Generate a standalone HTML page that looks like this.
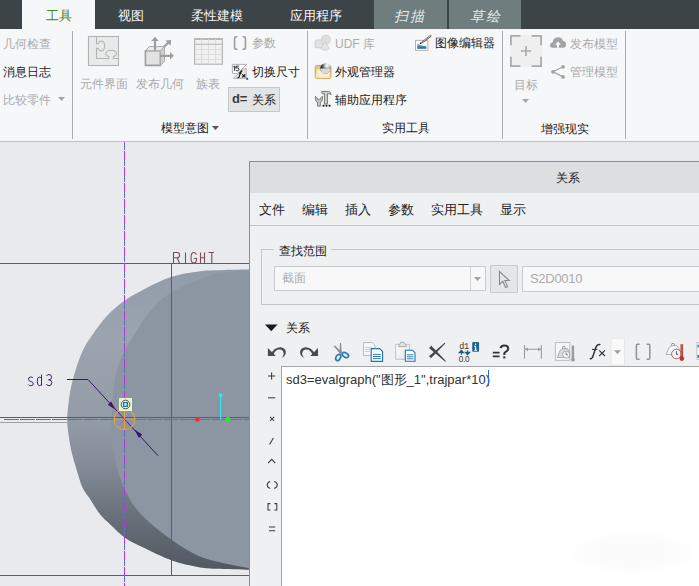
<!DOCTYPE html>
<html><head><meta charset="utf-8">
<style>
*{box-sizing:border-box}
html,body{margin:0;padding:0;width:699px;height:586px;overflow:hidden;background:#e9eaed;font-family:"Liberation Sans",sans-serif;}
.a{position:absolute;white-space:nowrap;line-height:1}
#tabs{position:absolute;left:0;top:0;width:699px;height:29px;background:#3c4447}
.tab{position:absolute;top:0;height:29px;font-size:13px;color:#f4f6f6;line-height:30px;padding-top:1px}
#ribbon{position:absolute;left:0;top:29px;width:699px;height:113px;background:#f6f7f9;border-bottom:1px solid #b9c3c1}
.sep{position:absolute;top:31px;width:1px;height:108px;background:#a9aeb0}
.t12{font-size:12px;line-height:14px}
.dis{color:#ababab}
.nor{color:#222}
svg{position:absolute;overflow:visible}
</style></head><body>

<div id="tabs">
  <div class="tab" style="left:22px;width:73px;background:#f6f7f9;color:#3f8a22;text-align:center">工具</div>
  <div class="tab" style="left:118px">视图</div>
  <div class="tab" style="left:191px">柔性建模</div>
  <div class="tab" style="left:290px">应用程序</div>
  <div class="tab" style="left:374px;width:73px;background:#707d7e"></div><div class="tab" style="left:396px;color:#e6ecec;font-size:14px;letter-spacing:2px;transform:skewX(-14deg)">扫描</div>
  <div class="tab" style="left:449px;width:72px;background:#707d7e"></div><div class="tab" style="left:472px;color:#e6ecec;font-size:14px;letter-spacing:2px;transform:skewX(-14deg)">草绘</div>
</div>

<div id="ribbon"></div>
<div class="sep" style="left:72px"></div>
<div class="sep" style="left:307px"></div>
<div class="sep" style="left:502px"></div>
<div class="sep" style="left:625px"></div>

<!-- group 1 -->
<div class="a t12 dis" style="left:3px;top:37px">几何检查</div>
<div class="a t12 nor" style="left:3px;top:65px">消息日志</div>
<div class="a t12 dis" style="left:3px;top:93px">比较零件</div>
<svg style="left:58px;top:97px" width="8" height="4"><path d="M0 0H7L3.5 4Z" fill="#a5a5a5"/></svg>

<!-- model intent -->
<div class="a t12 dis" style="left:80px;top:77px">元件界面</div>
<div class="a t12 dis" style="left:136px;top:77px">发布几何</div>
<div class="a t12 dis" style="left:196px;top:77px">族表</div>
<div class="a t12 dis" style="left:252px;top:36px">参数</div>
<div class="a t12 nor" style="left:252px;top:65px">切换尺寸</div>
<div class="a" style="left:228px;top:87px;width:52px;height:25px;background:#e3e4e6;border:1px solid #c6c7c9"></div>
<div class="a" style="left:232px;top:92px;font-size:13px;font-weight:bold;color:#3a3a3a;line-height:14px;letter-spacing:-0.3px">d=</div>
<div class="a t12 nor" style="left:252px;top:93px">关系</div>
<div class="a t12 nor" style="left:161px;top:121px">模型意图</div>
<svg style="left:212px;top:126px" width="8" height="4"><path d="M0 0H7L3.5 4Z" fill="#555"/></svg>

<!-- utilities -->
<div class="a t12 dis" style="left:335px;top:37px">UDF 库</div>
<div class="a t12 nor" style="left:335px;top:65px">外观管理器</div>
<div class="a t12 nor" style="left:335px;top:93px">辅助应用程序</div>
<div class="a t12 nor" style="left:435px;top:36px">图像编辑器</div>
<div class="a t12 nor" style="left:382px;top:121px">实用工具</div>

<!-- AR -->
<div class="a t12 dis" style="left:570px;top:37px">发布模型</div>
<div class="a t12 dis" style="left:570px;top:65px">管理模型</div>
<div class="a t12 dis" style="left:514px;top:78px">目标</div>
<svg style="left:522px;top:99px" width="8" height="4"><path d="M0 0H7L3.5 4Z" fill="#a5a5a5"/></svg>
<div class="a t12 nor" style="left:541px;top:122px">增强现实</div>


<!-- ribbon icons -->
<svg style="left:0;top:0" width="699" height="586">
<defs>
<linearGradient id="tan" x1="0" y1="0" x2="0" y2="1"><stop offset="0" stop-color="#dfc17a"/><stop offset="1" stop-color="#f5e8c4"/></linearGradient>
<radialGradient id="ball" cx="0.68" cy="0.22" r="0.75"><stop offset="0" stop-color="#ffffff"/><stop offset="0.3" stop-color="#c8cbce"/><stop offset="0.6" stop-color="#55595d"/><stop offset="1" stop-color="#0e1012"/></radialGradient>
<linearGradient id="sea" x1="0" y1="0" x2="0" y2="1"><stop offset="0" stop-color="#8cc8e4"/><stop offset="1" stop-color="#175a84"/></linearGradient>
</defs>
<!-- puzzle -->
<rect x="88.5" y="36.5" width="30" height="29" fill="#e8e9e9" stroke="#b3b3b3" stroke-width="1.1"/>
<path d="M96.5 36.5V43.6H98.2A3.5 5 0 1 1 98.2 48.4H96.5V58.5H108.8V56.6A5.4 3.3 0 1 1 113.4 56.6V58.5H118.5" fill="none" stroke="#b3b3b3" stroke-width="1.1"/>
<!-- publish geom cube -->
<path d="M145.4 50.8H160.4V65.4H145.4Z" fill="#e2e2e2" stroke="#9e9e9e" stroke-width="1.6"/>
<path d="M145.4 50.8L149.4 46.6H164.4L160.4 50.8Z" fill="#ededed" stroke="#a6a6a6" stroke-width="1"/>
<path d="M160.4 50.8L164.4 46.6V61.4L160.4 65.4Z" fill="#d3d3d3" stroke="#a6a6a6" stroke-width="1"/>
<path d="M155 50.4V40.4M164.2 46.8L168.6 42.2M160.8 55.8H170.6" stroke="#9e9e9e" stroke-width="2.2"/>
<path d="M151.2 40.9L155 36.8L158.8 40.9Z M165.4 40.6L171.2 39.9L170.6 45.8Z M170 52L173.9 55.8L170 59.6Z" fill="#9e9e9e"/>
<!-- family table -->
<rect x="194.6" y="38.6" width="27.8" height="25.6" fill="#f1f1f1" stroke="#b7b7b7" stroke-width="1.2"/>
<path d="M194.6 39.2H222.4" stroke="#b7b7b7" stroke-width="1.6"/>
<path d="M195 44.3H222M201.6 39V64M208.5 39V64M215.6 39V64M195 49.6H222M195 54.5H222M195 59.5H222" stroke="#d9d9d9" stroke-width="0.9"/>
<path d="M195 44.3H222" stroke="#c2c2c2" stroke-width="1.2"/>
<!-- ( ) param -->
<path d="M237.4 36.8H235.8Q234.6 36.8 234.6 38V48Q234.6 49.2 235.8 49.2H237.4M242.6 36.8H244.2Q245.4 36.8 245.4 38V48Q245.4 49.2 244.2 49.2H242.6" fill="none" stroke="#9c9c9c" stroke-width="1.6"/>
<!-- 15/fx switch dims -->
<path d="M232.4 64.4H246.6L237.6 73.4H232.4Z" fill="#fdfdfd" stroke="#a9a9a9" stroke-width="0.9"/>
<path d="M246.2 68.4V78.4H233.4L242.2 69.6Z" fill="#e4e4e4" stroke="#a9a9a9" stroke-width="0.9"/>
<path d="M233.2 67L234.7 66V70.8M238.8 66.1H236.2L235.9 68.2Q236.6 67.8 237.3 67.8Q238.9 67.8 238.9 69.3Q238.9 70.8 237.2 70.8Q236.3 70.8 235.8 70.3" fill="none" stroke="#111" stroke-width="0.9"/>
<path d="M237.6 77.6Q238.8 77.9 239.4 76.2L240.6 72.2Q241.1 70.8 242.4 71.2M239 73.1H241.6M242.2 74.4L245.2 77.4M245.2 74.4L242.2 77.4" fill="none" stroke="#111" stroke-width="1.1"/>
<rect x="246.2" y="77.8" width="2" height="2" fill="#1b5f8c"/>
<!-- UDF -->
<path d="M316.2 40H322.6V47.8H315.1V41.2Z" fill="#e2e2e2" stroke="#cacaca" stroke-width="0.9"/>
<circle cx="325.8" cy="39.6" r="4.6" fill="#dedede" stroke="#cdcdcd" stroke-width="0.8"/>
<path d="M325.3 41.8L320.8 48.6Q322.4 50.2 325.2 50.2Q328 50.2 329.6 48.6Z" fill="#e4e4e4" stroke="#cdcdcd" stroke-width="0.8"/>
<!-- appearance -->
<rect x="315.2" y="65.4" width="15.8" height="13.2" rx="1.8" fill="url(#tan)" stroke="#c9a55a" stroke-width="0.9"/>
<rect x="317" y="69.6" width="12.4" height="7.2" fill="#f7edd0"/>
<circle cx="325.4" cy="68.4" r="5.2" fill="url(#ball)"/>
<path d="M320.2 68.6A5.2 5.2 0 0 0 330.6 68.6Z" fill="#d6d8da"/>
<!-- aux tools -->
<path d="M315.4 96.2V99.4Q315.4 101.4 317.4 102V106.2H320.4V102Q322.4 101.4 322.4 99.4V96.2L320.8 97.8V99.2H317V97.8Z" fill="#c4c4c4" stroke="#6e6e6e" stroke-width="0.8"/>
<path d="M321.6 91.4H328.6Q330.6 91.6 331.2 94.6Q329.8 93.6 328.4 93.8H327.4V104H324.4V93.8H322.4Q321.6 93.2 321.6 91.4Z" fill="#cdcdcd" stroke="#5e5e5e" stroke-width="0.8"/>
<rect x="322.6" y="104.8" width="1.8" height="1.8" fill="#111"/>
<rect x="325.6" y="104.8" width="1.8" height="1.8" fill="#111"/>
<rect x="328.6" y="104.8" width="1.8" height="1.8" fill="#111"/>
<!-- image editor -->
<rect x="415.5" y="40.4" width="12.4" height="10" fill="#fff" stroke="#b3b3b3" stroke-width="1"/>
<path d="M417.2 43.6Q420 45 422 45.6Q424 46.2 426.4 46.2V48.8H417.2Z" fill="url(#sea)"/>
<path d="M420.6 43.4L422 41.6L430.6 35.2L431.4 36L422.8 42.4Z" fill="#fff" stroke="#333" stroke-width="0.6"/>
<path d="M422.6 42.6L431 36.4" stroke="#8a5a30" stroke-width="0.9"/>
<circle cx="420.6" cy="43.2" r="0.8" fill="#111"/>
<!-- target box -->
<rect x="510" y="35" width="32" height="32" fill="#efeff0"/>
<path d="M510.9 45.2V35.9H520.4M531.6 35.9H541.1V45.2M510.9 56.8V66.1H520.4M531.6 66.1H541.1V56.8" fill="none" stroke="#ababab" stroke-width="1.8"/>
<path d="M520.9 51H531.1M526 46V56" stroke="#ababab" stroke-width="1.7"/>
<!-- cloud -->
<path d="M552.4 47.8Q550 47.8 550 45Q550 42.6 552.6 42.2Q553.4 37.2 558.2 37.2Q562.2 37.2 563.2 41Q566 41.2 566 44.6Q566 47.8 563 47.8Z" fill="#a3a3a3"/>
<path d="M558 41.6L555 44.8H557V47.8H559V44.8H561Z" fill="#f6f7f9"/>
<!-- share -->
<path d="M563 66.8L553 71.8L563 76.9" fill="none" stroke="#a3a3a3" stroke-width="1.2"/>
<circle cx="563" cy="66.8" r="1.9" fill="#a3a3a3"/>
<circle cx="553" cy="71.8" r="1.9" fill="#a3a3a3"/>
<circle cx="563" cy="76.9" r="1.9" fill="#a3a3a3"/>
</svg>

<!-- graphics -->
<svg style="left:0;top:0" width="699" height="586" viewBox="0 0 699 586">
<defs>
<linearGradient id="band" x1="0" y1="269" x2="0" y2="571" gradientUnits="userSpaceOnUse">
<stop offset="0" stop-color="#929ca8"/>
<stop offset="0.22" stop-color="#9ba4af"/>
<stop offset="0.5" stop-color="#939ca6"/>
<stop offset="0.64" stop-color="#858e98"/>
<stop offset="0.8" stop-color="#6b737c"/>
<stop offset="1" stop-color="#50575f"/>
</linearGradient>
</defs>
<path d="M249.0 269.6 C244.9 269.7 231.3 269.8 224.4 270.0 C217.5 270.2 211.6 270.3 207.3 270.6 C203.0 270.9 203.0 271.0 198.7 271.6 C194.4 272.2 185.9 273.3 181.5 274.2 C177.1 275.1 175.4 275.7 172.0 276.8 C168.6 277.9 165.5 279.0 160.9 281.0 C156.3 283.0 150.5 285.8 144.6 289.0 C138.7 292.2 131.9 295.4 125.5 300.0 C119.1 304.6 112.3 310.0 106.4 316.4 C100.5 322.8 94.0 332.5 90.0 338.3 C86.0 344.1 84.8 346.3 82.5 351.2 C80.2 356.1 78.3 361.8 76.4 367.6 C74.5 373.4 72.6 380.2 71.3 386.0 C70.0 391.8 69.3 397.0 68.6 402.4 C67.9 407.8 67.3 413.3 67.2 418.3 C67.1 423.3 67.5 426.9 68.2 432.3 C68.9 437.7 69.9 444.6 71.3 450.7 C72.7 456.8 74.5 462.9 76.4 469.0 C78.3 475.1 80.2 482.6 82.5 487.6 C84.8 492.6 87.0 494.5 90.0 499.0 C93.0 503.5 96.8 510.2 100.2 514.5 C103.6 518.8 106.4 520.9 110.5 524.7 C114.6 528.5 119.5 533.9 124.6 537.5 C129.7 541.1 133.3 542.7 141.2 546.5 C149.1 550.3 162.5 557.1 171.9 560.5 C181.3 563.9 190.2 565.5 197.5 566.9 C204.8 568.3 207.2 568.3 215.8 568.8 C224.4 569.3 243.5 569.6 249.0 569.8 L260 569.8 L260 269.6 Z" fill="url(#band)"/>
<path d="M249.0 270.3 C245.8 270.6 236.5 271.1 230.0 272.0 C223.5 272.9 219.9 272.2 210.2 275.5 C200.5 278.8 182.0 286.0 172.0 291.9 C162.0 297.8 156.5 303.7 150.1 311.0 C143.7 318.3 138.2 328.3 133.7 335.6 C129.1 342.9 125.8 348.3 122.8 354.7 C119.8 361.1 117.6 367.4 116.0 373.8 C114.4 380.2 113.9 386.2 113.2 393.0 C112.5 399.8 112.3 408.6 111.9 414.8 C111.5 421.0 110.2 422.4 110.8 430.0 C111.4 437.6 113.3 450.9 115.6 460.7 C117.9 470.5 120.3 479.9 124.6 488.9 C128.9 497.9 133.3 506.0 141.2 514.5 C149.1 523.0 162.5 533.2 171.9 540.0 C181.3 546.8 189.0 551.6 197.5 555.4 C206.0 559.2 214.5 560.9 223.0 563.0 C231.5 565.1 244.4 567.3 248.7 568.2 L260 568.2 L260 270.3 Z" fill="#8b96a2"/>
<g fill="none" stroke="#7b5155" stroke-width="1" shape-rendering="crispEdges">
<path d="M0 263.5H250M171.5 263V575M0 575.5H250M0 417.5H250"/>
</g>
<path d="M0 422.5H67" stroke="#9ca2a8" stroke-width="1" shape-rendering="crispEdges"/>
<g stroke-width="1" shape-rendering="crispEdges" fill="none">
<path d="M124.5 142V586" stroke="#c02ee0" stroke-dasharray="15 1" stroke-dashoffset="7"/>
<path d="M124.5 142V586" stroke="#15a3a0" stroke-dasharray="0 8 3 2 2 1" stroke-dashoffset="7"/>
<path d="M4 419.5H250" stroke="#c02ee0" stroke-dasharray="15 1"/>
<path d="M4 419.5H250" stroke="#15a3a0" stroke-dasharray="0 8 3 2 2 1"/>
</g>
<!-- RIGHT -->
<g fill="none" stroke="#7b4f54" stroke-width="1.1">
<path d="M173.5 263V252.5H177.5Q179.5 252.5 179.5 255.2Q179.5 257.8 177.5 257.8H173.5M177 257.8L179.5 263"/>
<path d="M185.5 252.5V263"/>
<path d="M196.5 254.5Q195.5 252.5 193.6 252.5Q191 252.5 191 257.8Q191 263 193.6 263Q196.5 263 196.5 259.5V258.5H193.8"/>
<path d="M200.5 252.5V263M204.5 252.5V263M200.5 257.7H204.5"/>
<path d="M208.5 252.5H214M211.8 252.5V263"/>
</g>
<!-- sd3 -->
<g fill="none" stroke="#3d1468" stroke-width="0.95">
<path d="M33 378Q32.5 377 30.8 377Q28.5 377 28.5 379.2Q28.5 381 30.8 381.5Q33.3 382 33.3 384Q33.3 385.7 30.8 385.7Q28.8 385.7 28.3 384.5"/>
<path d="M41.5 374.5V385.7M41.5 378.5Q40.5 377 39.3 377Q37.3 377 37.3 381.3Q37.3 385.7 39.3 385.7Q40.5 385.7 41.5 384.2"/>
<path d="M46.5 376Q47.3 374.5 49 374.5Q51.6 374.5 51.6 377.3Q51.6 379.8 48.6 379.8Q51.8 379.8 51.8 382.7Q51.8 385.7 49 385.7Q47 385.7 46.3 384"/>
</g>
<path d="M67 379.5H88L158 455.7" fill="none" stroke="#3d1468" stroke-width="1"/>
<path d="M115.6 409.8 L107.8 404.8 L109.5 403.2 L111.2 401.6 Z" fill="#3d1468"/>
<path d="M134.4 429.6 L142.2 434.6 L140.5 436.2 L138.8 437.8 Z" fill="#3d1468"/>
<!-- orange circle -->
<g fill="none" stroke="#f0a12a" stroke-width="1.05">
<path d="M124.5 408.8L129.7 410.2L133.6 414.1L135 419.3L133.6 424.5L129.7 428.4L124.5 429.8L119.3 428.4L115.4 424.5L114 419.3L115.4 414.1L119.3 410.2Z"/>
<path d="M114 419.3H135M124.5 409V430"/>
</g>
<path d="M120.3 423.5L129.9 414.5M120 414.5L129 423.5" stroke="#c04ae0" stroke-width="0.8"/>
<rect x="119" y="398" width="13" height="13" fill="#e3f6cf"/>
<circle cx="125.5" cy="404.5" r="4.3" fill="none" stroke="#4a4f4a" stroke-width="1"/>
<rect x="123" y="402" width="5" height="5" fill="#1f74a8"/>
<rect x="124.2" y="403.2" width="2.6" height="2.6" fill="#bfe6f5"/>
<!-- red/cyan/green -->
<circle cx="197.4" cy="419.4" r="2.4" fill="#f03030"/>
<path d="M220.6 395V419.4" stroke="#28e8f0" stroke-width="1.2"/>
<circle cx="220.6" cy="395.2" r="2" fill="#28e8f0"/>
<circle cx="227.9" cy="419.4" r="2.6" fill="#28e838"/>
</svg>

<!-- dialog -->
<div class="a" style="left:249px;top:161px;width:460px;height:440px;background:#eff0f2;border:1px solid #8d8d8d"></div>
<div class="a" style="left:250px;top:162px;width:460px;height:31px;background:#dcdfe0"></div>
<div class="a t12 nor" style="left:556px;top:171px">关系</div>
<div class="a" style="left:250px;top:225px;width:460px;height:1px;background:#c4c5c7"></div>
<div class="a nor" style="left:259px;top:203px;font-size:13px">文件</div>
<div class="a nor" style="left:302px;top:203px;font-size:13px">编辑</div>
<div class="a nor" style="left:345px;top:203px;font-size:13px">插入</div>
<div class="a nor" style="left:388px;top:203px;font-size:13px">参数</div>
<div class="a nor" style="left:431px;top:203px;font-size:13px">实用工具</div>
<div class="a nor" style="left:500px;top:203px;font-size:13px">显示</div>


<!-- search scope group -->
<div class="a" style="left:261px;top:249px;width:460px;height:56px;border:1px solid #c3c5c7"></div>
<div class="a" style="left:274px;top:245px;width:57px;height:8px;background:#eff0f2"></div>
<div class="a nor" style="left:279px;top:244px;font-size:12px;line-height:14px">查找范围</div>
<div class="a" style="left:274px;top:266px;width:212px;height:25px;background:#f8f8f9;border:1px solid #c9cacc"></div>
<div class="a" style="left:470px;top:267px;width:1px;height:23px;background:#d2d3d5"></div>
<svg style="left:474px;top:277px" width="8" height="5"><path d="M0 0H7L3.5 4Z" fill="#a0a0a0"/></svg>
<div class="a dis" style="left:282px;top:271px;font-size:12px;line-height:14px">截面</div>
<div class="a" style="left:490px;top:265px;width:28px;height:28px;background:#e5e6e8;border:1px solid #c8c9cb"></div>
<svg style="left:498px;top:270px" width="14" height="20"><path d="M1.5 1.5V14.5L4.8 11.3L7.6 17.5L9.6 16.6L6.9 10.5H11.3Z" fill="none" stroke="#8a8a8a" stroke-width="1.1" stroke-linejoin="miter"/></svg>
<div class="a" style="left:522px;top:266px;width:200px;height:26px;background:#f8f8f9;border:1px solid #c9cacc"></div>
<div class="a dis" style="left:530px;top:271px;font-size:13px;line-height:15px;letter-spacing:-0.3px">S2D0010</div>

<!-- relations header -->
<svg style="left:265px;top:324px" width="13" height="8"><path d="M0 0.5H12.5L6.25 7.2Z" fill="#1a1a1a"/></svg>
<div class="a nor" style="left:286px;top:321px;font-size:12px;line-height:14px">关系</div>


<!-- toolbar -->
<svg style="left:0;top:0" width="699" height="586">
<defs>
<linearGradient id="paper" x1="0" y1="0" x2="1" y2="1"><stop offset="0" stop-color="#ffffff"/><stop offset="1" stop-color="#dde3e6"/></linearGradient>
</defs>
<!-- undo -->
<g id="undo">
<path d="M267.9 348.1V356H275.7Z" fill="#464c50"/>
<path d="M271.2 353.2C273.6 349 277.6 346.8 281.4 347.4C286.6 348.3 288 354.6 281.6 358C284.6 354.8 284.2 350.8 281 349.8C277.6 348.8 275 351 273.4 354.4Z" fill="#464c50"/>
</g>
<use href="#undo" transform="translate(585.9,0) scale(-1,1)"/>
<!-- scissors -->
<path d="M333.6 345.9L335 345.5L341.8 352.5L340.3 353.9Z" fill="#8c8c8c"/>
<path d="M339.9 343L341 343L341.9 353.6L339.5 353.6Z" fill="#8c8c8c"/>
<ellipse cx="338.1" cy="357.5" rx="2.2" ry="3.3" transform="rotate(28 338.2 357.7)" fill="#e6f1f7" stroke="#2a7eb0" stroke-width="1.7"/>
<ellipse cx="345.3" cy="355.1" rx="3.4" ry="2.1" transform="rotate(28 345.5 355.3)" fill="#e6f1f7" stroke="#2a7eb0" stroke-width="1.7"/>
<!-- copy -->
<path d="M363.5 342.5H372.2L375 345.3V355.5H363.5Z" fill="#f6f6f6" stroke="#b4b4b4" stroke-width="0.9"/>
<path d="M365 347.5H372M365 349.5H372M365 351.5H370" stroke="#c6c6c6" stroke-width="0.8"/>
<path d="M371.2 348.6H379.6L382.6 351.6V361.4H371.2Z" fill="#fbfcfd" stroke="#2373a3" stroke-width="1.1"/>
<path d="M373 354.4H380.8M373 356.5H380.8M373 358.6H380.8" stroke="#2f80b0" stroke-width="1"/>
<!-- paste -->
<path d="M395.6 344.3H409.6V359.3H395.6Z" fill="url(#paper)" stroke="#bcbcbc" stroke-width="0.9"/>
<path d="M398.5 346.6H406.3V345.5Q404.5 343.8 404 342.3H400.8Q400.3 343.8 398.5 345.5Z" fill="#dfe3e6" stroke="#9a9a9a" stroke-width="0.8"/>
<path d="M405.3 350.2H412.5L415 352.7V361.3H405.3Z" fill="#fbfcfd" stroke="#2373a3" stroke-width="1.1"/>
<path d="M407 354.8H413.4M407 356.8H413.4M407 358.8H413.4" stroke="#2f80b0" stroke-width="1"/>
<!-- X -->
<path d="M428.10 347.17 L445.29 361.73 L445.91 361.07 L430.30 344.83 A1.60 1.60 0 0 1 428.10 347.17 Z" fill="#404448"/>
<path d="M430.23 359.09 L445.31 343.43 L444.69 342.77 L428.17 356.91 A1.50 1.50 0 0 1 430.23 359.09 Z" fill="#404448"/>
<!-- d1 0.0 -->
<text x="459.3" y="348.6" font-family="Liberation Mono" font-size="8.5" fill="#3a3a3a" letter-spacing="-0.5">d1</text>
<text x="458.8" y="361.8" font-family="Liberation Sans" font-size="8.2" fill="#3a3a3a" letter-spacing="-0.3">0.0</text>
<path d="M461.4 350.2L459.2 352.6H463.6Z M461.4 351.6V354.8" fill="#1b5f8c" stroke="#1b5f8c" stroke-width="1.1"/>
<path d="M467.6 354.8L465.4 352.4H469.8Z M467.6 353.4V350.2" fill="#1b5f8c" stroke="#1b5f8c" stroke-width="1.1"/>
<rect x="472.2" y="341.9" width="6.9" height="9.9" rx="1" fill="#1d6690"/>
<path d="M475.6 343.6V344.9M475.6 346.2V350.2M474.2 346.3H475.8M474.2 350.2H477.1" stroke="#fff" stroke-width="1.1"/>
<!-- =? -->
<path d="M492.8 352.6H499.6M492.8 356.4H499.6" stroke="#333" stroke-width="1.9"/>
<path d="M500.6 348.2Q501 345.5 504.3 345.5Q508.2 345.5 508.2 348.6Q508.2 350.6 506 351.6Q504.2 352.6 504.2 354.4V355" fill="none" stroke="#333" stroke-width="2.1"/>
<rect x="503.2" y="356.4" width="2.2" height="2" fill="#333"/>
<!-- dim -->
<path d="M524.5 345V358.7M541.3 345V358.7M525 349.3H541" stroke="#9c9c9c" stroke-width="1.1"/>
<path d="M525 349.3L528 347.4V351.2Z M541 349.3L538 347.4V351.2Z" fill="#9c9c9c"/>
<!-- mass -->
<path d="M555.4 342.5H569.8V360.4H555.4Z" fill="#f4f6f7" stroke="#b5b5b5" stroke-width="0.9"/>
<path d="M557.4 357.5L559.6 351.2Q561 348.6 564 348.6H567.5L569.5 351.5V357.5Z" fill="#d9dcde" stroke="#9e9e9e" stroke-width="0.8"/>
<path d="M562.6 348.6V347.2Q562.6 346.2 563.8 346.2Q565 346.2 565 347.2V348.6" fill="none" stroke="#8a8a8a" stroke-width="0.9"/>
<circle cx="566.2" cy="354.6" r="3.6" fill="#eef2f4" stroke="#9a9a9a" stroke-width="0.8"/>
<path d="M566.2 352.4V354.8H568" fill="none" stroke="#555" stroke-width="0.7"/>
<path d="M572.9 345.5V359" stroke="#9a9a9a" stroke-width="2.4"/>
<circle cx="572.9" cy="359.7" r="1.9" fill="#9a9a9a"/>
<!-- fx -->
<path d="M589.8 358.4Q591.4 359.4 592.6 357.2L596.2 346.6Q597.4 343.8 600.4 344.6" fill="none" stroke="#333" stroke-width="1.5"/>
<path d="M592 349.4H597.3" stroke="#333" stroke-width="1.1"/>
<path d="M599.2 350.4L605 356M605 350.4L599.2 356" stroke="#333" stroke-width="1.1"/>
<rect x="611" y="338.2" width="13.5" height="27" fill="#f9f9fa" stroke="#e2e3e5" stroke-width="0.8"/>
<path d="M613.9 350.2H621L617.45 354Z" fill="#9c9c9c"/>
<!-- ( ) -->
<path d="M639.6 344.3H637.6Q636.4 344.3 636.4 345.6V358Q636.4 359.3 637.6 359.3H639.6M646.6 344.3H648.6Q649.8 344.3 649.8 345.6V358Q649.8 359.3 648.6 359.3H646.6" fill="none" stroke="#929292" stroke-width="1.5"/>
<!-- thermo -->
<path d="M666.2 354.5L668.6 348Q670 345.6 673 345.6H676.8L679 348.5V354.5Z" fill="#f2f3f4" stroke="#a0a0a0" stroke-width="0.8"/>
<path d="M671.6 345.6V344.2Q671.6 343.4 673 343.4Q674.4 343.4 674.4 344.2V345.6" fill="none" stroke="#8a8a8a" stroke-width="0.9"/>
<circle cx="676.4" cy="354" r="4.8" fill="#f0f2f4" stroke="#9a6050" stroke-width="0.9"/>
<path d="M676.4 351V354.4H678.4" fill="none" stroke="#444" stroke-width="0.8"/>
<path d="M681.8 344.2V358" stroke="#b83030" stroke-width="2.6"/>
<path d="M681.8 343.6V358" stroke="#d9d9d9" stroke-width="0.7" opacity="0.6"/>
<circle cx="681.8" cy="358.6" r="2.3" fill="#b83030"/>
<!-- partial -->
<rect x="697" y="342.5" width="4" height="17" fill="#fff" stroke="#b0b0b0" stroke-width="0.8"/>
<rect x="697.5" y="344.9" width="3" height="2.5" fill="#2a8bc0"/>
<rect x="697.5" y="355.2" width="3" height="2.5" fill="#1a5f8c"/>
</svg>

<!-- text area -->
<div class="a" style="left:281px;top:366px;width:430px;height:230px;background:#fff;border-left:1px solid #a3a5a7;border-top:1px solid #a3a5a7"></div>
<div class="a" style="left:286px;top:372px;font-size:13px;line-height:15px;color:#333">sd3=evalgraph("图形_1",trajpar*10)</div>
<div class="a" style="left:488px;top:370px;width:1px;height:16px;background:#1e6fd0"></div>


<div class="a" style="left:570px;top:530px;width:125px;height:45px;border-radius:50%;background:radial-gradient(ellipse at center,#fafafa 0%,#fcfcfc 50%,rgba(255,255,255,0) 75%)"></div>
<!-- symbols -->
<svg style="left:0;top:0" width="699" height="586">
<g fill="none" stroke="#3a3a3a" stroke-width="1.05">
<path d="M268 376H275.2M271.6 372.4V379.6"/>
<path d="M268 397.8H275.2"/>
<path d="M270 416.8L274.2 421M274.2 416.8L270 421"/>
<path d="M269.6 444.6L273.4 437.9"/>
<path d="M268.1 463.2L271.7 459.3L275.3 463.2"/>
<path d="M270.2 481.6Q267.2 482.4 267.2 485Q267.2 487.6 270.2 488.4M274.2 481.6Q277.2 482.4 277.2 485Q277.2 487.6 274.2 488.4"/>
<path d="M270.4 503.6H268V509.9H270.4M274.4 503.6H276.8V509.9H274.4"/>
<path d="M269 526.9H275.2M269 530.7H275.2"/>
</g>
</svg>

</body></html>
